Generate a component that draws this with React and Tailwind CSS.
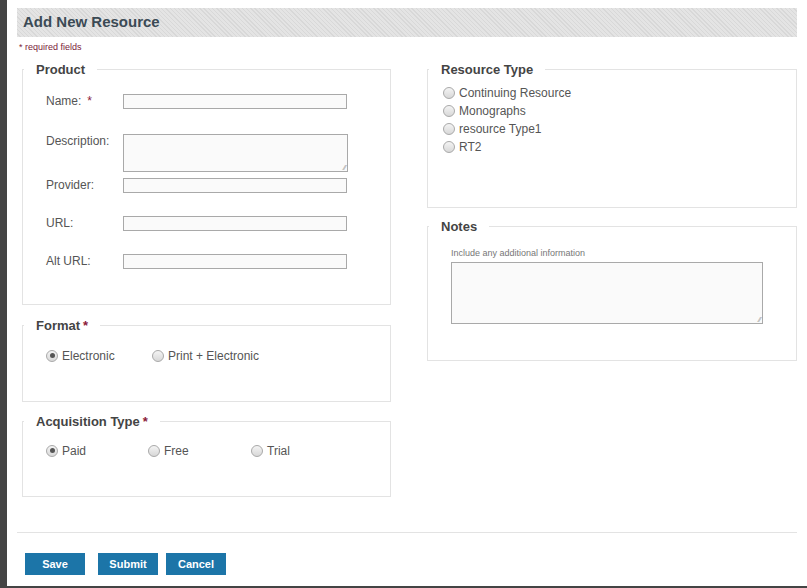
export default function App(){
const f={fontFamily:'"Liberation Sans", Arial, sans-serif'};
const Radio=({checked,label,w})=>(
<label className="flex items-center gap-[4px] text-[12px] text-[#555] leading-[18px]" style={w?{width:w}:{}}>
<span className="w-[12px] h-[12px] rounded-full border border-[#a9a9a9] bg-gradient-to-b from-[#f4f4f4] to-[#d8d8d8] flex items-center justify-center">{checked&&<span className="w-[5px] h-[5px] rounded-full bg-[#555]"/>}</span>{label}</label>);
const Legend=({children,req})=>(<legend className="px-[12px] ml-[1px] text-[13px] font-bold text-[#444]">{children}{req&&<span className="text-[#8b1a3a] ml-[3px]">*</span>}</legend>);
const Input=()=>(<div className="w-[224px] h-[15px] border border-[#a9a9a9] bg-[#fafafa]"/>);
const Row=({label,req,children,mt})=>(<div className={"flex items-start "+mt}><div className="w-[77px] text-[12px] text-[#555] leading-[14px]">{label}{req&&<span className="text-[#8b1a3a] ml-[6px]">*</span>}</div>{children}</div>);
return(<div style={f} className="w-[807px] h-[588px] bg-[#444] flex flex-col overflow-hidden">
<div className="flex-1 ml-[7px] bg-white flex flex-col pl-[10px] pr-[10px] pt-[8px]">
<div className="h-[29px] bg-[repeating-linear-gradient(45deg,#e4e4e4_0px,#e4e4e4_2px,#d8d8d8_2px,#d8d8d8_3px)] flex items-center pl-[6px] text-[15px] font-bold text-[#3b4a55]">Add New Resource</div>
<div className="text-[9px] text-[#7a1a3a] mt-[4px] ml-[2px] h-[12px]">* required fields</div>
<div className="flex gap-[36px] ml-[5px] mt-[7px]">
<div className="w-[369px] flex flex-col">
<fieldset className="border border-[#e3e3e3] h-[245px]"><Legend>Product</Legend>
<div className="pl-[23px]">
<Row label="Name:" req mt="mt-[14px]"><Input/></Row>
<Row label="Description:" mt="mt-[25px]"><div className="w-[225px] h-[38px] border border-[#a9a9a9] bg-[#fafafa] relative"><span className="absolute right-[1px] bottom-[0px] text-[7px] text-[#888] leading-none">⁄⁄</span></div></Row>
<Row label="Provider:" mt="mt-[6px]"><Input/></Row>
<Row label="URL:" mt="mt-[23px]"><Input/></Row>
<Row label="Alt URL:" mt="mt-[23px]"><Input/></Row>
</div></fieldset>
<fieldset className="border border-[#e3e3e3] h-[86px] mt-[11px]"><Legend req>Format</Legend>
<div className="flex mt-[11px] pl-[23px]"><Radio checked label="Electronic" w={106}/><Radio label="Print + Electronic"/></div>
</fieldset>
<fieldset className="border border-[#e3e3e3] h-[85px] mt-[10px]"><Legend req>Acquisition Type</Legend>
<div className="flex mt-[10px] pl-[23px]"><Radio checked label="Paid" w={102}/><Radio label="Free" w={103}/><Radio label="Trial"/></div>
</fieldset>
</div>
<div className="w-[370px] flex flex-col">
<fieldset className="border border-[#e3e3e3] h-[148px]"><Legend>Resource Type</Legend>
<div className="flex flex-col mt-[4px] pl-[15px]"><Radio label="Continuing Resource"/><Radio label="Monographs"/><Radio label="resource Type1"/><Radio label="RT2"/></div>
</fieldset>
<fieldset className="border border-[#e3e3e3] h-[144px] mt-[9px]"><Legend>Notes</Legend>
<div className="pl-[23px]">
<div className="text-[9px] text-[#777] mt-[10px]">Include any additional information</div>
<div className="w-[312px] h-[62px] border border-[#a9a9a9] bg-[#fafafa] mt-[2px] relative"><span className="absolute right-[1px] bottom-[0px] text-[7px] text-[#888] leading-none">⁄⁄</span></div>
</div></fieldset>
</div>
</div>
<div className="border-t border-[#e3e3e3] mt-[35px]"/>
<div className="flex mt-[20px] ml-[8px] text-[11px] font-bold text-white">
<div className="w-[60px] h-[22px] bg-[#1c75a8] flex items-center justify-center">Save</div>
<div className="w-[60px] h-[22px] bg-[#1c75a8] flex items-center justify-center ml-[13px]">Submit</div>
<div className="w-[60px] h-[22px] bg-[#1c75a8] flex items-center justify-center ml-[8px]">Cancel</div>
</div>
</div>
<div className="h-[2px]"/>
</div>);}
